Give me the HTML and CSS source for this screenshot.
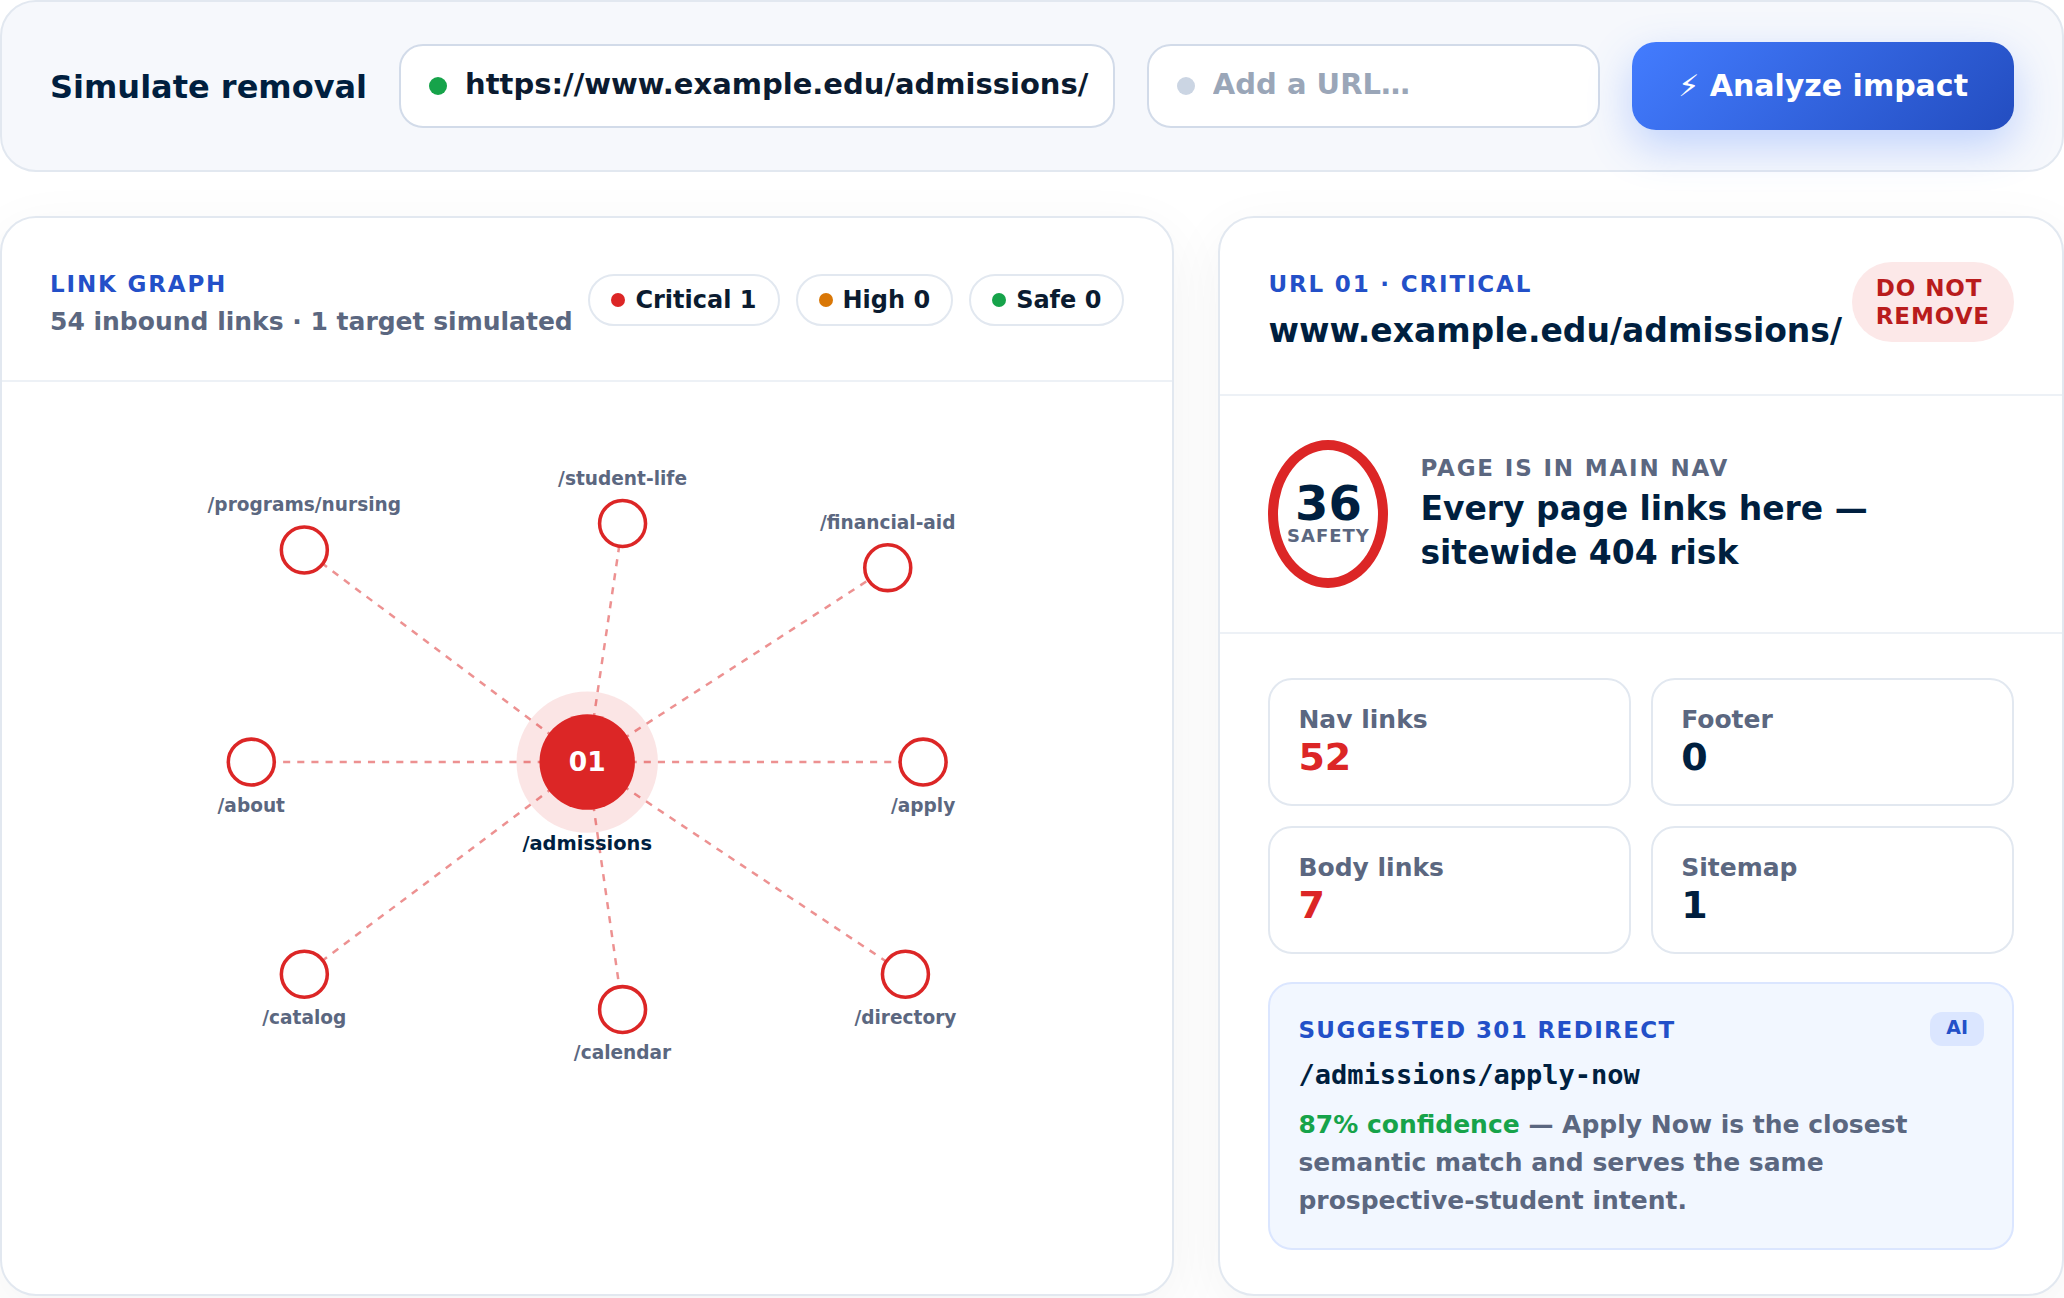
FILE: index.html
```html
<!DOCTYPE html>
<html lang="en">
<head>
<meta charset="utf-8">
<title>Simulate removal</title>
<meta name="viewport" content="width=device-width, initial-scale=1">
<link rel="stylesheet" href="styles.css">
</head>
<body>
<main class="page">
  <form class="toolbar">
    <h1 class="toolbar-title">Simulate removal</h1>
    <label class="field">
      <span class="field-dot field-dot-active"></span>
      <input class="field-input" type="text" aria-label="URL to remove" value="https://www.example.edu/admissions/">
    </label>
    <label class="field">
      <span class="field-dot"></span>
      <input class="field-input" type="text" aria-label="Another URL" placeholder="Add a URL…">
    </label>
    <button class="analyze" type="button">⚡ Analyze impact</button>
  </form>

  <div class="panels">
    <section class="panel">
      <header class="panel-head panel-head-center">
        <div>
          <p class="eyebrow eyebrow-head">LINK GRAPH</p>
          <p class="subtitle">54 inbound links · 1 target simulated</p>
        </div>
        <ul class="pills">
          <li class="pill pill-critical">Critical 1</li>
          <li class="pill pill-high">High 0</li>
          <li class="pill pill-safe">Safe 0</li>
        </ul>
      </header>
      <svg class="graph" viewBox="-2 -1 1324 860" role="img" aria-label="Pages that link to /admissions">
        <g class="edges">
          <line x1="660" y1="429" x2="340" y2="189"/>
          <line x1="660" y1="429" x2="700" y2="159"/>
          <line x1="660" y1="429" x2="1000" y2="209"/>
          <line x1="660" y1="429" x2="280" y2="429"/>
          <line x1="660" y1="429" x2="1040" y2="429"/>
          <line x1="660" y1="429" x2="340" y2="669"/>
          <line x1="660" y1="429" x2="700" y2="709"/>
          <line x1="660" y1="429" x2="1020" y2="669"/>
        </g>
        <g class="nodes">
          <circle cx="340" cy="189" r="26"/>
          <circle cx="700" cy="159" r="26"/>
          <circle cx="1000" cy="209" r="26"/>
          <circle cx="280" cy="429" r="26"/>
          <circle cx="1040" cy="429" r="26"/>
          <circle cx="340" cy="669" r="26"/>
          <circle cx="700" cy="709" r="26"/>
          <circle cx="1020" cy="669" r="26"/>
        </g>
        <g class="node-labels">
          <text x="340" y="145">/programs/nursing</text>
          <text x="700" y="115">/student-life</text>
          <text x="1000" y="165">/financial-aid</text>
          <text x="280" y="485">/about</text>
          <text x="1040" y="485">/apply</text>
          <text x="340" y="725">/catalog</text>
          <text x="700" y="765">/calendar</text>
          <text x="1020" y="725">/directory</text>
        </g>
        <circle class="hub-halo" cx="660" cy="429" r="80"/>
        <circle class="hub" cx="660" cy="429" r="54"/>
        <text class="hub-number" x="660" y="439">01</text>
        <text class="hub-label" x="660" y="528">/admissions</text>
      </svg>
    </section>

    <section class="panel">
      <header class="panel-head">
        <div>
          <p class="eyebrow eyebrow-head">URL 01 · CRITICAL</p>
          <h2 class="url-title">www.example.edu/admissions/</h2>
        </div>
        <strong class="verdict">DO NOT<br>REMOVE</strong>
      </header>
      <div class="score">
        <div class="ring">
          <span class="ring-value">36</span>
          <span class="ring-label">SAFETY</span>
        </div>
        <div class="score-body">
          <p class="eyebrow eyebrow-muted">PAGE IS IN MAIN NAV</p>
          <p class="score-text">Every page links here — sitewide 404 risk</p>
        </div>
      </div>
      <div class="details">
        <dl class="stats">
          <div class="stat"><dt>Nav links</dt><dd class="bad">52</dd></div>
          <div class="stat"><dt>Footer</dt><dd>0</dd></div>
          <div class="stat"><dt>Body links</dt><dd class="bad">7</dd></div>
          <div class="stat"><dt>Sitemap</dt><dd>1</dd></div>
        </dl>
        <article class="redirect">
          <div class="redirect-head">
            <h3 class="eyebrow eyebrow-redirect">SUGGESTED 301 REDIRECT</h3>
            <span class="ai">AI</span>
          </div>
          <code class="redirect-path">/admissions/apply-now</code>
          <p class="redirect-text"><em class="confidence">87% confidence</em> — Apply Now is the closest semantic match and serves the same prospective-student intent.</p>
        </article>
      </div>
    </section>
  </div>
</main>
</body>
</html>
```
FILE: styles.css
```css
:root {
  --navy: #001f3f;
  --ink: #0b1b30;
  --muted: #5b6780;
  --blue: #2350c8;
  --red: #dc2626;
  --orange: #d97706;
  --green: #16a34a;
  --line: #e2e8f0;
  --hairline: #edf1f6;
}

* {
  box-sizing: border-box;
  margin: 0;
  padding: 0;
}

body {
  background: #fff;
  color: var(--ink);
  font-family: "DejaVu Sans", sans-serif;
  font-weight: 700;
}

.page {
  display: grid;
  gap: 44px;
  padding-bottom: 2px;
}

/* Toolbar */
.toolbar {
  display: grid;
  grid-template-columns: auto minmax(0, 30fr) minmax(0, 19fr) auto;
  align-items: center;
  gap: 32px;
  padding: 40px 48px;
  border: 2px solid var(--line);
  border-radius: 36px;
  background: #f6f8fc;
}

.toolbar-title {
  padding-top: 2px;
  color: var(--navy);
  font-size: 32px;
  line-height: 44px;
}

.field {
  display: flex;
  align-items: center;
  gap: 18px;
  height: 84px;
  padding: 0 20px 0 28px;
  border: 2px solid #d2dbe9;
  border-radius: 24px;
  background: #fff;
}

.field-dot {
  flex: none;
  width: 18px;
  height: 18px;
  border-radius: 50%;
  background: #cbd5e3;
}

.field-dot-active {
  background: var(--green);
}

.field-input {
  flex: 1;
  min-width: 0;
  padding-bottom: 4px;
  border: 0;
  outline: 0;
  background: none;
  color: var(--ink);
  font: inherit;
  font-size: 29px;
  line-height: 44px;
}

.field-input::placeholder {
  color: #9aa6b8;
  opacity: 1;
}

.analyze {
  height: 88px;
  padding: 0 46px 2px;
  border: 0;
  border-radius: 24px;
  background: linear-gradient(135deg, #437cff, #234dc0);
  box-shadow: 0 16px 44px rgba(67, 124, 255, 0.3);
  color: #fff;
  font: inherit;
  font-size: 30px;
  white-space: nowrap;
}

/* Panels */
.panels {
  display: grid;
  grid-template-columns: minmax(0, 25fr) minmax(0, 18fr);
  gap: 44px;
}

.panel {
  border: 2px solid var(--line);
  border-radius: 36px;
  background: #fff;
  box-shadow: 0 16px 60px rgba(0, 0, 0, 0.05);
}

.panel-head {
  display: flex;
  align-items: flex-start;
  justify-content: space-between;
  padding: 44px 48px;
  border-bottom: 2px solid var(--hairline);
}

.panel-head-center {
  align-items: center;
}

.eyebrow {
  color: var(--blue);
  font-size: 23px;
  letter-spacing: 0.08em;
  line-height: 26px;
}

.eyebrow-head {
  line-height: 44px;
}

.eyebrow-muted {
  margin-bottom: 6px;
  color: var(--muted);
}

.eyebrow-redirect {
  letter-spacing: 0.06em;
  line-height: 36px;
}

.subtitle {
  margin-top: 2px;
  color: var(--muted);
  font-size: 25px;
  line-height: 28px;
}

.pills {
  display: flex;
  gap: 16px;
  padding-top: 2px;
  list-style: none;
}

.pill {
  display: flex;
  align-items: center;
  gap: 10px;
  padding: 9px 21px;
  border: 2px solid var(--line);
  border-radius: 26px;
  font-size: 24px;
  line-height: 30px;
  white-space: nowrap;
}

.pill::before {
  content: "";
  width: 14px;
  height: 14px;
  border-radius: 50%;
  background: currentColor;
}

.pill-critical::before {
  background: var(--red);
}

.pill-high::before {
  background: var(--orange);
}

.pill-safe::before {
  background: var(--green);
}

/* Link graph */
.graph {
  display: block;
  width: 100%;
  font-family: "DejaVu Sans", sans-serif;
  font-weight: 700;
  text-anchor: middle;
}

.edges {
  stroke: var(--red);
  stroke-width: 2.8;
  stroke-dasharray: 8 8;
  opacity: 0.5;
}

.nodes {
  fill: #fff;
  stroke: var(--red);
  stroke-width: 4;
}

.node-labels {
  fill: var(--muted);
  font-size: 21px;
}

.hub-halo {
  fill: var(--red);
  opacity: 0.12;
}

.hub {
  fill: var(--red);
}

.hub-number {
  fill: #fff;
  font-size: 30px;
}

.hub-label {
  fill: var(--navy);
  font-size: 22px;
}

/* URL details */
.url-title {
  margin-top: 6px;
  color: var(--navy);
  font-size: 33px;
  line-height: 38px;
}

.verdict {
  flex: none;
  padding: 12px 24px;
  border-radius: 40px;
  background: #fce8e8;
  color: #b91c1c;
  font-size: 23px;
  letter-spacing: 0.04em;
  line-height: 28px;
}

.score {
  display: flex;
  align-items: center;
  gap: 32px;
  padding: 44px 48px;
  border-bottom: 2px solid var(--hairline);
}

.ring {
  display: flex;
  flex: none;
  flex-direction: column;
  align-items: center;
  justify-content: center;
  width: 120px;
  height: 148px;
  border: 10px solid var(--red);
  border-radius: 50%;
}

.ring-value {
  color: var(--navy);
  font-size: 48px;
  line-height: 44px;
}

.ring-label {
  color: var(--muted);
  font-size: 18px;
  letter-spacing: 1px;
  line-height: 22px;
}

.score-body {
  padding-top: 2px;
}

.score-text {
  color: var(--navy);
  font-size: 33px;
  line-height: 44px;
}

.details {
  display: grid;
  gap: 28px;
  padding: 44px 48px;
}

.stats {
  display: grid;
  grid-template-columns: 1fr 1fr;
  gap: 20px;
}

.stat {
  padding: 24px 28px 26px;
  border: 2px solid var(--line);
  border-radius: 24px;
}

.stat dt {
  color: var(--muted);
  font-size: 25px;
  line-height: 32px;
}

.stat dd {
  color: var(--navy);
  font-size: 38px;
  line-height: 42px;
}

.stat .bad {
  color: var(--red);
}

.redirect {
  padding: 28px;
  border: 2px solid #dbe6ff;
  border-radius: 24px;
  background: #f2f7ff;
}

.redirect-head {
  display: flex;
  align-items: flex-start;
  justify-content: space-between;
}

.ai {
  padding: 0 16px 4px;
  border-radius: 12px;
  background: #dbe6ff;
  color: var(--blue);
  font-size: 19px;
  line-height: 30px;
}

.redirect-path {
  display: block;
  margin-top: 8px;
  color: var(--navy);
  font-family: "DejaVu Sans Mono", monospace;
  font-size: 27px;
  line-height: 38px;
}

.redirect-text {
  margin-top: 12px;
  color: var(--muted);
  font-size: 25px;
  line-height: 38px;
}

.confidence {
  color: var(--green);
  font-style: normal;
}
```
